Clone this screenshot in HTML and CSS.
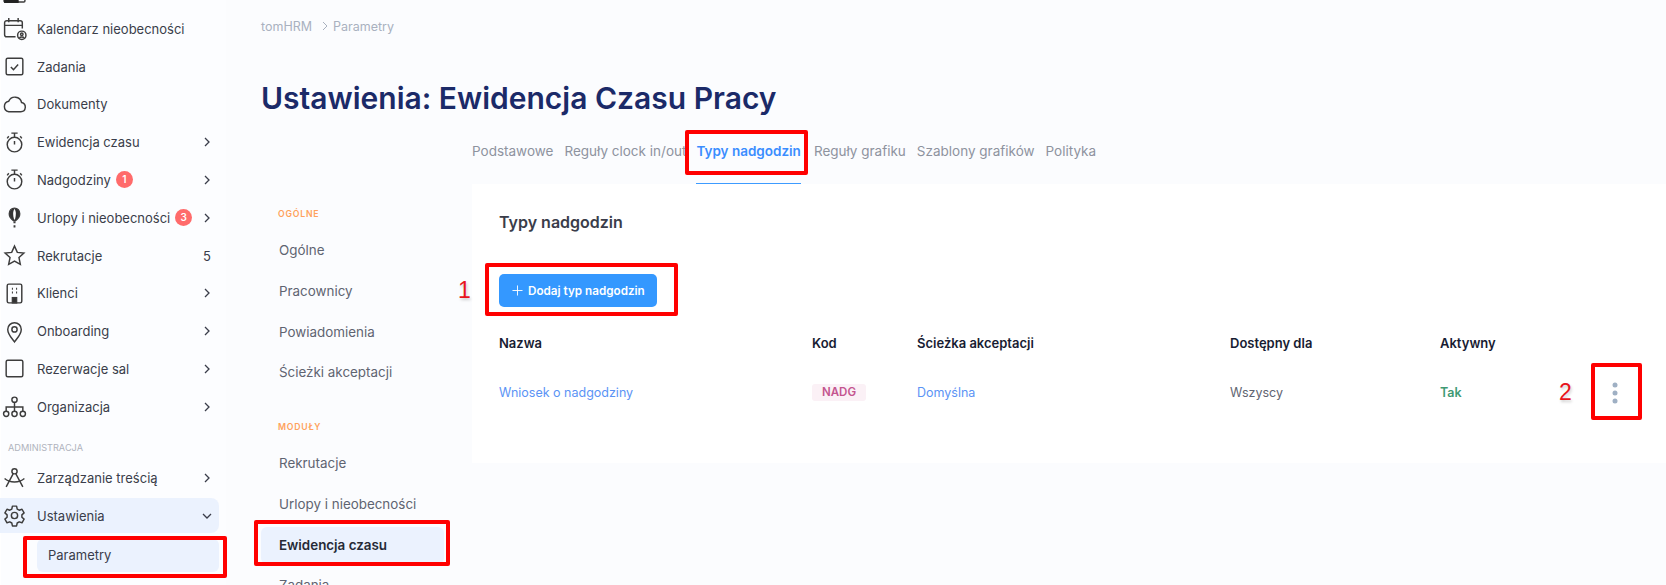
FILE: index.html
```html
<!DOCTYPE html>
<html lang="pl">
<head>
    <meta charset="UTF-8">
    <title>Ustawienia: Ewidencja Czasu Pracy</title>
    <link rel="stylesheet" href="styles.css">
</head>
<body>
<div class="page">
    <aside class="sidebar">
        <ul class="menu">
            <li class="menu-item menu-cut">
                <svg class="icon" viewBox="0 0 24 24"><rect x="2" y="2" width="20" height="20" rx="1"/><rect x="2" y="18" width="14" height="5" fill="#222" stroke="none"/></svg>
            </li>
            <li class="menu-item">
                <svg class="icon" viewBox="0 0 24 24"><path d="M13 20H4.500a2 2 0 0 1-2-2V6.500a2 2 0 0 1 2-2h13a2 2 0 0 1 2 2V12M2.500 9h17M6.500 2v4M15.500 2v4"/><circle cx="19" cy="18.500" r="4"/><circle cx="19" cy="17.500" r="1.200"/><path d="M16.800 21.200c.5-1.300 3.900-1.300 4.400 0"/></svg>
                <span class="menu-label">Kalendarz nieobecności</span>
            </li>
            <li class="menu-item">
                <svg class="icon" viewBox="0 0 24 24"><rect x="4" y="4" width="16" height="16" rx="1.500"/><path d="M8.500 12.500l2.500 2.500 4.500-5"/></svg>
                <span class="menu-label">Zadania</span>
            </li>
            <li class="menu-item">
                <svg class="icon" viewBox="0 0 24 24"><path d="M6.500 19h11.500a4.500 4.500 0 0 0 .8-8.900 6.500 6.500 0 0 0-12.300-1.300A5.200 5.200 0 0 0 6.500 19z"/></svg>
                <span class="menu-label">Dokumenty</span>
            </li>
            <li class="menu-item">
                <svg class="icon" viewBox="0 0 24 24"><circle cx="12" cy="14" r="7"/><path d="M12 10.500V14M9 3h6M12 3v4M5 8l1.500-2M19 8l-1.500-2"/></svg>
                <span class="menu-label">Ewidencja czasu</span>
                <svg class="chevron" viewBox="0 0 10 10"><path d="M3 1l4 4-4 4"/></svg>
            </li>
            <li class="menu-item">
                <svg class="icon" viewBox="0 0 24 24"><circle cx="12" cy="14" r="7"/><path d="M12 10.500V14M9 3h6M12 3v4M5 8l1.500-2M19 8l-1.500-2"/></svg>
                <span class="menu-label">Nadgodziny</span>
                <span class="count">1</span>
                <svg class="chevron" viewBox="0 0 10 10"><path d="M3 1l4 4-4 4"/></svg>
            </li>
            <li class="menu-item">
                <svg class="icon" viewBox="0 0 24 24"><path d="M12 3c-3 0-5 2.500-5 5.500 0 3 2.500 5.500 4 6.500h2c1.500-1 4-3.500 4-6.500C17 5.500 15 3 12 3z" fill="#333"/><path d="M12 3.500c-1 1.500-1.300 3.200-1.300 5s.4 4.500 1.300 6c.9-1.500 1.300-4.200 1.300-6s-.3-3.500-1.300-5z" fill="#fff" stroke="none"/><path d="M11 16.500h2M12 19.500v2" stroke-width="1.800"/></svg>
                <span class="menu-label">Urlopy i nieobecności</span>
                <span class="count">3</span>
                <svg class="chevron" viewBox="0 0 10 10"><path d="M3 1l4 4-4 4"/></svg>
            </li>
            <li class="menu-item">
                <svg class="icon" viewBox="0 0 24 24"><path d="M12 3l2.700 6 6.300.7-4.700 4.300 1.300 6.500L12 17.300 6.400 20.500 7.700 14 3 9.700 9.300 9z"/></svg>
                <span class="menu-label">Rekrutacje</span>
                <span class="menu-num">5</span>
            </li>
            <li class="menu-item">
                <svg class="icon" viewBox="0 0 24 24"><rect x="5" y="3" width="14" height="18" rx="1.500"/><path d="M9.500 7.500h1M13.500 7.500h1M9.500 11h1M13.500 11h1" stroke-width="2"/><rect x="10" y="16" width="4" height="5" fill="#333"/></svg>
                <span class="menu-label">Klienci</span>
                <svg class="chevron" viewBox="0 0 10 10"><path d="M3 1l4 4-4 4"/></svg>
            </li>
            <li class="menu-item">
                <svg class="icon" viewBox="0 0 24 24"><path d="M12 22c-3-4-6.500-7.500-6.500-12a6.500 6.500 0 0 1 13 0c0 4.500-3.500 8-6.500 12z"/><circle cx="12" cy="10" r="2.500"/></svg>
                <span class="menu-label">Onboarding</span>
                <svg class="chevron" viewBox="0 0 10 10"><path d="M3 1l4 4-4 4"/></svg>
            </li>
            <li class="menu-item">
                <svg class="icon" viewBox="0 0 24 24"><rect x="4" y="4" width="16" height="16" rx="1.500"/></svg>
                <span class="menu-label">Rezerwacje sal</span>
                <svg class="chevron" viewBox="0 0 10 10"><path d="M3 1l4 4-4 4"/></svg>
            </li>
            <li class="menu-item">
                <svg class="icon" viewBox="0 0 24 24"><circle cx="12" cy="5.500" r="2.500"/><circle cx="4" cy="19" r="2.500"/><circle cx="12" cy="19" r="2.500"/><circle cx="20" cy="19" r="2.500"/><path d="M12 8v8.500M4 16.500V12.500h16v4"/></svg>
                <span class="menu-label">Organizacja</span>
                <svg class="chevron" viewBox="0 0 10 10"><path d="M3 1l4 4-4 4"/></svg>
            </li>
            <li class="menu-heading">ADMINISTRACJA</li>
            <li class="menu-item">
                <svg class="icon" viewBox="0 0 24 24"><circle cx="12" cy="6" r="2.500"/><path d="M10.800 8.200L4 21M13.200 8.200L20 21M2.500 13c5 4.500 14 4.500 19 0"/></svg>
                <span class="menu-label">Zarządzanie treścią</span>
                <svg class="chevron" viewBox="0 0 10 10"><path d="M3 1l4 4-4 4"/></svg>
            </li>
            <li class="menu-item menu-open">
                <svg class="icon" viewBox="0 0 24 24"><circle cx="12" cy="12" r="3"/><path d="M10 3h4l.6 2.800 1.900 1.100 2.700-.9 2 3.500-2.100 1.900v2.200l2.100 1.900-2 3.500-2.700-.9-1.900 1.100L14 22h-4l-.6-2.800-1.900-1.100-2.700.9-2-3.500 2.100-1.900v-2.200L2.800 9.500l2-3.500 2.700.9 1.900-1.100z" stroke-linejoin="round"/></svg>
                <span class="menu-label">Ustawienia</span>
                <svg class="chevron" viewBox="0 0 10 10"><path d="M1 3l4 4 4-4"/></svg>
            </li>
            <li class="submenu-item">Parametry</li>
        </ul>
    </aside>

    <main class="content">
        <div class="breadcrumb">
            <span>tomHRM</span>
            <svg class="crumb-sep" viewBox="0 0 10 10"><path d="M3 1l4 4-4 4"/></svg>
            <span>Parametry</span>
        </div>
        <h1 class="page-title">Ustawienia: Ewidencja Czasu Pracy</h1>
        <nav class="tabs">
            <a class="tab">Podstawowe</a>
            <a class="tab">Reguły clock in/out</a>
            <a class="tab tab-active">Typy nadgodzin</a>
            <a class="tab">Reguły grafiku</a>
            <a class="tab">Szablony grafików</a>
            <a class="tab">Polityka</a>
        </nav>
        <div class="settings">
            <div class="settings-nav">
                <div class="nav-heading">OGÓLNE</div>
                <a class="nav-link">Ogólne</a>
                <a class="nav-link">Pracownicy</a>
                <a class="nav-link">Powiadomienia</a>
                <a class="nav-link">Ścieżki akceptacji</a>
                <div class="nav-heading nav-heading-second">MODUŁY</div>
                <a class="nav-link">Rekrutacje</a>
                <a class="nav-link">Urlopy i nieobecności</a>
                <a class="nav-link nav-link-active">Ewidencja czasu</a>
                <a class="nav-link">Zadania</a>
            </div>
            <section class="panel">
                <h2 class="panel-title">Typy nadgodzin</h2>
                <button class="add-btn">
                    <svg class="add-icon" viewBox="0 0 12 12"><path d="M6 .5v11M.5 6h11"/></svg>
                    Dodaj typ nadgodzin
                </button>
                <table class="types">
                    <thead>
                        <tr>
                            <th class="col-name">Nazwa</th>
                            <th class="col-code">Kod</th>
                            <th class="col-path">Ścieżka akceptacji</th>
                            <th class="col-for">Dostępny dla</th>
                            <th>Aktywny</th>
                            <th class="col-menu"></th>
                        </tr>
                    </thead>
                    <tbody>
                        <tr>
                            <td><a class="link">Wniosek o nadgodziny</a></td>
                            <td><span class="code">NADG</span></td>
                            <td><a class="link">Domyślna</a></td>
                            <td class="muted">Wszyscy</td>
                            <td class="yes">Tak</td>
                            <td>
                                <svg class="dots" viewBox="0 0 6 22"><circle cx="3" cy="3" r="2.500"/><circle cx="3" cy="11" r="2.500"/><circle cx="3" cy="19" r="2.500"/></svg>
                            </td>
                        </tr>
                    </tbody>
                </table>
            </section>
        </div>
    </main>

    <!-- czerwone ramki ze zrzutu -->
    <div class="mark mark-tab"></div>
    <div class="mark mark-add"></div>
    <div class="mark mark-dots"></div>
    <div class="mark mark-nav"></div>
    <div class="mark mark-sub"></div>
    <span class="mark-num mark-num-1">1</span>
    <span class="mark-num mark-num-2">2</span>
</div>
</body>
</html>
```

FILE: styles.css
```css
* {
    box-sizing: border-box;
}
html, body {
    margin: 0;
    height: 585px;
    overflow: hidden;
}
body {
    font-family: Inter, "Noto Sans", sans-serif;
    font-size: 14px;
    color: #3f4254;
    background-color: #fbfcfe;
}
.page {
    position: relative;
    display: flex;
    height: 585px;
    overflow: hidden;
}

/* sidebar */
.sidebar {
    width: 226px;
    flex-shrink: 0;
    background-color: #fcfdff;
    border-left: 1px solid #fff;
}
.menu {
    list-style: none;
    margin: -26.5px 0 0 -1px;
    padding: 0;
    display: flex;
    flex-direction: column;
    gap: 2.8px;
}
.menu-item {
    display: flex;
    align-items: center;
    width: 219px;
    height: 35px;
    flex-shrink: 0;
    padding: 0 7px 0 2px;
    border-radius: 0 8px 8px 0;
    font-size: 13px;
    color: #3a3d4a;
}
.menu-open {
    background-color: #ebf2fe;
}
.icon {
    width: 25px;
    height: 25px;
    flex-shrink: 0;
    margin-right: 10px;
    fill: none;
    stroke: #3d3d3d;
    stroke-width: 1.400;
}
.menu-label {
    white-space: nowrap;
}
.count {
    width: 17px;
    height: 17px;
    margin-left: 5px;
    border-radius: 50%;
    background-color: #ff6b6b;
    color: #fff;
    font-size: 10px;
    font-weight: 600;
    line-height: 17px;
    text-align: center;
}
.chevron {
    width: 10px;
    height: 10px;
    margin-left: auto;
    fill: none;
    stroke: #3a3d4a;
    stroke-width: 1.300;
}
.menu-num {
    margin-left: auto;
    margin-right: 1px;
}
.menu-heading {
    height: 30.500px;
    padding: 15px 0 0 8px;
    font-size: 9.200px;
    line-height: 12px;
    color: #b0b3bd;
}
.submenu-item {
    width: 182px;
    height: 33px;
    margin: 3px 0 0 37px;
    padding-left: 11px;
    border-radius: 6px;
    background-color: #ebf2fe;
    font-size: 13px;
    line-height: 33px;
    color: #3a3d4a;
}

/* main */
.content {
    flex: 1;
    min-width: 0;
    padding: 17px 0 0 35px;
}
.breadcrumb {
    display: flex;
    align-items: center;
    height: 18px;
    font-size: 12.500px;
    color: #a9b1bf;
}
.crumb-sep {
    width: 10px;
    height: 10px;
    margin: 0 3px 0 8px;
    fill: none;
    stroke: #a9b1bf;
    stroke-width: 1;
}
.page-title {
    margin: 42.5px 0 0;
    height: 40px;
    font-size: 30px;
    font-weight: 600;
    line-height: 40px;
    color: #1b2a68;
}
.tabs {
    display: flex;
    gap: 11px;
    height: 66px;
    margin-top: 1px;
    margin-left: 211px;
    padding-top: 23px;
    font-size: 13.500px;
    color: #8e939e;
}
.tab {
    height: 43px;
    line-height: 18px;
    white-space: nowrap;
}
.tab-active {
    margin: 0 2px 0 -1px;
    border-bottom: 2px solid #3d9bff;
    color: #3a8dff;
    font-weight: 600;
}
.settings {
    display: flex;
    margin-top: -1px;
}
.settings-nav {
    display: flex;
    flex-direction: column;
    gap: 3.700px;
    width: 211px;
    flex-shrink: 0;
    padding-top: 24.5px;
}
.nav-heading {
    height: 12px;
    margin-bottom: 8.500px;
    padding-left: 17px;
    font-size: 8.700px;
    font-weight: 600;
    line-height: 12px;
    letter-spacing: .8px;
    color: #ffa25c;
}
.nav-heading-second {
    margin-top: 26px;
}
.nav-link {
    display: block;
    width: 183px;
    height: 37px;
    flex-shrink: 0;
    padding-left: 18px;
    border-radius: 6px;
    font-size: 13.400px;
    line-height: 37px;
    color: #5f6471;
}
.nav-link-active {
    background-color: #ebf2fe;
    color: #262a36;
    font-weight: 600;
}
.panel {
    flex: 1;
    height: 279px;
    padding: 28px 0 0 27px;
    background-color: #fff;
}
.panel-title {
    margin: 0;
    height: 20px;
    font-size: 16px;
    font-weight: 600;
    line-height: 20px;
    color: #3a3d4a;
}
.add-btn {
    display: flex;
    align-items: center;
    gap: 5px;
    width: 158px;
    height: 33px;
    margin-top: 42.5px;
    padding: 0 0 0 13px;
    border: none;
    border-radius: 5px;
    background-color: #3498ff;
    color: #fff;
    font-family: inherit;
    font-size: 11.700px;
    font-weight: 600;
    white-space: nowrap;
}
.add-icon {
    width: 11px;
    height: 11px;
    fill: none;
    stroke: #fff;
    stroke-width: 1;
}
.types {
    table-layout: fixed;
    width: 1167px;
    margin-top: 25.5px;
    border-collapse: collapse;
    font-size: 12.500px;
}
.types th {
    height: 20px;
    padding: 0;
    font-size: 13px;
    font-weight: 600;
    text-align: left;
    color: #181c32;
}
.types td {
    height: 80px;
    padding: 0;
}
.col-name { width: 313px; }
.col-code { width: 105px; }
.col-path { width: 313px; }
.col-for { width: 210px; }
.col-menu { width: 54px; }
.link {
    color: #5b93f5;
}
.code {
    display: inline-block;
    width: 54px;
    height: 17px;
    border-radius: 3px;
    background-color: #fbf1f6;
    color: #c4558f;
    font-size: 11.500px;
    font-weight: 600;
    line-height: 17px;
    text-align: center;
}
.muted {
    color: #5f6471;
}
.yes {
    color: #3f9a74;
    font-weight: 600;
}
.dots {
    display: block;
    width: 6px;
    height: 22px;
    fill: #9fb0c4;
}

/* red marks drawn over the screenshot */
.mark {
    position: absolute;
    border: 4px solid #f00;
    border-radius: 2px;
}
.mark-tab { left: 685px; top: 130px; width: 123px; height: 45px; }
.mark-add { left: 485px; top: 263px; width: 193px; height: 53px; }
.mark-dots { left: 1591px; top: 363px; width: 51px; height: 57px; }
.mark-nav { left: 254px; top: 520px; width: 196px; height: 46px; }
.mark-sub { left: 23px; top: 536px; width: 204px; height: 42px; }
.mark-num {
    position: absolute;
    font-family: "Liberation Sans", sans-serif;
    font-size: 23px;
    line-height: 24px;
    color: #e8141c;
    text-shadow: 1px 2px 3px rgba(0,0,0,0.2);
}
.mark-num-1 { left: 458px; top: 278px; }
.mark-num-2 { left: 1559px; top: 380px; }
```
